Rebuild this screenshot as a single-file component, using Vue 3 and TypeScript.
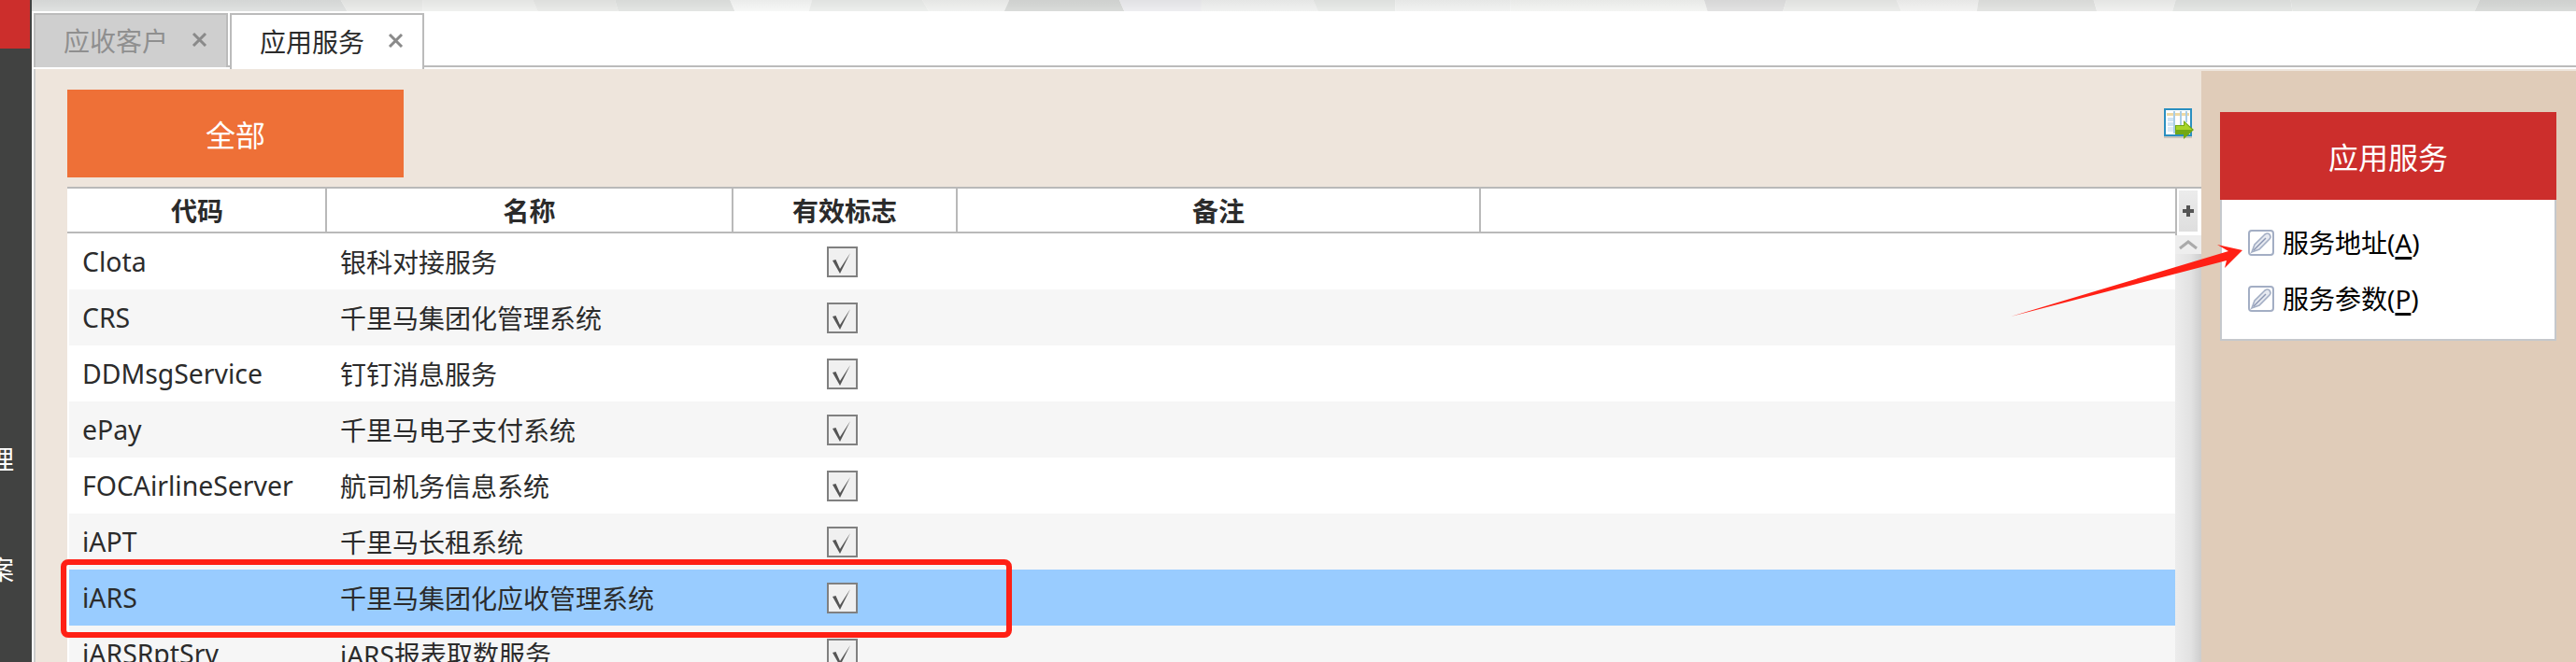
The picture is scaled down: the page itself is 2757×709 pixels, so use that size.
<script setup lang="ts">
interface Row { code: string; name: string; selected?: boolean }
const rows: Row[] = [
  { code: 'Clota', name: '银科对接服务' },
  { code: 'CRS', name: '千里马集团化管理系统' },
  { code: 'DDMsgService', name: '钉钉消息服务' },
  { code: 'ePay', name: '千里马电子支付系统' },
  { code: 'FOCAirlineServer', name: '航司机务信息系统' },
  { code: 'iAPT', name: '千里马长租系统' },
  { code: 'iARS', name: '千里马集团化应收管理系统', selected: true },
  { code: 'iARSRptSrv', name: 'iARS报表取数服务' },
]
const actions = [
  { label: '服务地址', key: 'A' },
  { label: '服务参数', key: 'P' },
]
// Decorative strip facets: [top edge, bottom edge, colour], in strip pixels.
const k = 2757 / 1568
const edges: [number, number, string][] = [
  [20, 20, '#dfe1e0'], [208, 212, '#ebecea'], [258, 258, '#eff0ee'], [325, 328, '#e9eae8'],
  [375, 377, '#e3e5e3'], [445, 448, '#f7f8f7'], [495, 493, '#eceeec'], [562, 566, '#f1f2f0'],
  [615, 612, '#d9dbd9'], [682, 685, '#ededf0'], [732, 732, '#f1f2f1'], [800, 803, '#e9ebe9'],
  [850, 850, '#f2f3f2'], [920, 920, '#f4f5f3'], [1038, 1040, '#e2e2e2'], [1088, 1086, '#ebecea'],
  [1155, 1158, '#f3f3f2'], [1205, 1204, '#e3e4e2'], [1275, 1277, '#f0f1ef'], [1325, 1323, '#e4e6e4'],
  [1395, 1396, '#e6e8e6'], [1510, 1507, '#d9dbd9'], [1570, 1570, '#d9dbd9'],
]
const facets = edges.slice(0, -1).map((e, i) => {
  const n = edges[i + 1]
  const x = (v: number) => ((v - 20) * k).toFixed(1)
  return { points: `${x(e[0])},0 ${x(n[0])},0 ${x(n[1])},12 ${x(e[1])},12`, fill: e[2] }
})
</script>

<template>
  <div class="page">
    <aside class="side">
      <div class="side-red"></div>
      <span class="side-a">理</span>
      <span class="side-b">案</span>
    </aside>
    <main class="main">
      <svg class="strip" width="2723" height="12" viewBox="0 0 2723 12">
        <defs>
          <linearGradient id="stripShade" x1="0" y1="0" x2="0" y2="1">
            <stop offset="0" stop-color="#000" stop-opacity="0.05" />
            <stop offset="1" stop-color="#000" stop-opacity="0" />
          </linearGradient>
        </defs>
        <polygon v-for="f in facets" :key="f.points" :points="f.points" :fill="f.fill" />
        <rect width="2723" height="12" fill="url(#stripShade)" />
      </svg>
      <nav class="tabs">
        <div class="tab tab-off">
          <span>应收客户</span>
          <svg class="x" width="17" height="15" viewBox="0 0 17 15"><path d="M2 1l13 13M15 1L2 14" stroke="#8a8a8a" stroke-width="3" fill="none" /></svg>
        </div>
        <div class="tab tab-on">
          <span>应用服务</span>
          <svg class="x" width="17" height="15" viewBox="0 0 17 15"><path d="M2 1l13 13M15 1L2 14" stroke="#8a8a8a" stroke-width="3" fill="none" /></svg>
        </div>
      </nav>
      <div class="body">
        <section class="left">
          <div class="toolbar">
            <button class="all">全部</button>
            <svg class="export" width="33" height="33" viewBox="0 0 33 33">
              <rect x="0" y="30" width="30" height="2" fill="#c9c4bd" />
              <rect x="1" y="1" width="28" height="28" fill="#fff" stroke="#2a8fc0" stroke-width="2" />
              <rect x="3" y="5" width="24" height="3" fill="#eed9a4" />
              <rect x="4" y="10" width="6" height="4" fill="#cfe4f4" />
              <rect x="4" y="15" width="6" height="4" fill="#cfe4f4" />
              <rect x="4" y="20" width="6" height="5" fill="#dcebf7" />
              <path d="M11 3v24M18 3v15M24 3v12" stroke="#a9cde6" stroke-width="2" fill="none" />
              <path d="M12 18h9v-5l11 10-11 10v-5h-9z" fill="#72a814" />
              <path d="M13 19h9v-4l8 8H13z" fill="#a8d42a" />
            </svg>
          </div>
          <div class="grid">
            <div class="grid-main">
              <div class="head">
                <div class="c1 hc">代码</div>
                <div class="c2 hc">名称</div>
                <div class="c3 hc">有效标志</div>
                <div class="c4 hc">备注</div>
                <div class="c5"></div>
              </div>
              <div v-for="(r, i) in rows" :key="r.code" class="row" :class="{ odd: i % 2 === 1, sel: r.selected }">
                <div class="c1 cell code">{{ r.code }}</div>
                <div class="c2 cell">{{ r.name }}</div>
                <div class="c3 cell chk">
                  <span class="box">
                    <svg width="29" height="29" viewBox="0 0 29 29"><path d="M4 13l3.5-1 4.5 10L23 5 12 27z" fill="#555" /></svg>
                  </span>
                </div>
              </div>
            </div>
            <div class="scroll">
              <div class="plus-wrap">
                <div class="plus"><svg width="14" height="14" viewBox="0 0 14 14"><path d="M5 1h4v4h4v4H9v4H5V9H1V5h4z" fill="#555" /></svg></div>
              </div>
              <div class="up"><svg width="20" height="12" viewBox="0 0 20 12"><path d="M1 10l9-7 9 7" fill="none" stroke="#aaa" stroke-width="3" /></svg></div>
              <div class="track"></div>
            </div>
          </div>
        </section>
        <aside class="right">
          <div class="card">
            <div class="card-head">应用服务</div>
            <div class="card-body">
              <div v-for="a in actions" :key="a.key" class="action">
                <svg width="28" height="28" viewBox="0 0 28 28">
                  <rect x="1" y="1" width="26" height="26" rx="3" fill="#fff" stroke="#a3aec4" stroke-width="2" />
                  <path d="M4 24l3-8L18 5q3-2 5 0 2 3 0 5L12 21z" fill="#e6e9f0" stroke="#a3aec4" stroke-width="1.6" />
                  <path d="M6 22L19 9" stroke="#8a96b2" stroke-width="1.5" />
                </svg>
                <span class="action-text">{{ a.label }}(<u>{{ a.key }}</u>)</span>
              </div>
            </div>
          </div>
        </aside>
      </div>
    </main>
    <div class="mark-box"></div>
    <svg class="mark-arrow" width="254" height="84" viewBox="0 0 254 84">
      <path d="M2 81L235 11 223 4 250 10 231 29 233 21z" fill="#ff2015" />
    </svg>
  </div>
</template>

<style>
html, body { margin: 0; padding: 0; background: #fff; overflow: hidden; }
</style>

<style scoped>
.page {
  position: relative;
  display: flex;
  width: 2757px;
  height: 709px;
  overflow: hidden;
  background: #fff;
  color: #2b2b2b;
  font-family: "Noto Sans", "Noto Sans CJK SC", sans-serif;
  font-size: 28px;
}
.side {
  width: 34px;
  flex: none;
  background: #414241;
  color: #fff;
  overflow: hidden;
  display: flex;
  flex-direction: column;
  align-items: flex-start;
  line-height: 28px;
}
.side-red { width: 32px; height: 52px; background: #cc2e2c; margin-right: 2px; }
.side-a { margin: 426px 0 0 -13px; }
.side-b { margin: 90px 0 0 -13px; }
.main { flex: 1; min-width: 0; display: flex; flex-direction: column; }
.strip { display: block; flex: none; }
.tabs {
  height: 60px;
  flex: none;
  box-sizing: border-box;
  display: flex;
  gap: 2px;
  padding-top: 2px;
  margin-left: 2px;
  border-bottom: 2px solid #bbb;
}
.tab {
  width: 208px;
  height: 58px;
  box-sizing: border-box;
  border: 2px solid #bbb;
  border-bottom: 0;
  display: flex;
  align-items: center;
  line-height: 1;
}
.tab span { margin-left: 30px; }
.tab-off { background: #cfcfcf; color: #8f8f8f; }
.tab-on { background: #fff; height: 60px; color: #2b2b2b; }
.x { flex: none; margin: -4px 0 0 25px; }
.body { flex: 1; min-height: 0; display: flex; margin: 2px 0 0 2px; background: #eee5dc; border-left: 2px solid #ccc; }
.left { flex: 1; min-width: 0; padding: 22px 0 0 34px; }
.toolbar { display: flex; justify-content: space-between; align-items: flex-start; height: 104px; }
.all {
  width: 360px;
  height: 94px;
  border: 0;
  padding: 0;
  background: #ee7037;
  color: #fff;
  font: inherit;
  font-size: 32px;
}
.export { margin: 20px 7px 0 0; }
.grid { display: flex; height: 520px; }
.grid-main { flex: 1; min-width: 0; background: #fff; border-left: 2px solid #fff; }
.head {
  display: flex;
  height: 50px;
  box-sizing: border-box;
  border-top: 2px solid #b9b9b9;
  border-bottom: 2px solid #b9b9b9;
  margin-left: -2px;
  padding-left: 2px;
  background: #fff;
}
.hc {
  display: flex;
  align-items: center;
  justify-content: center;
  font-weight: 700;
  border-right: 2px solid #b9b9b9;
  box-sizing: border-box;
}
.c1 { width: 276px; flex: none; box-sizing: border-box; }
.c2 { width: 435px; flex: none; box-sizing: border-box; }
.c3 { width: 240px; flex: none; box-sizing: border-box; }
.c4 { width: 560px; flex: none; box-sizing: border-box; }
.c5 { flex: 1; }
.row { display: flex; height: 60px; background: #fff; }
.row.odd { background: #f6f6f6; }
.row.sel { background: #99ccff; }
.cell { display: flex; align-items: center; padding-left: 14px; white-space: nowrap; }
.code { font-size: 28.4px; }
.chk { padding-left: 100px; }
.box {
  width: 33px;
  height: 33px;
  box-sizing: border-box;
  border: 2px solid #808080;
  background: #f0f0f0;
  display: block;
}
.box svg { display: block; }
.scroll { width: 28px; flex: none; display: flex; flex-direction: column; }
.plus-wrap { height: 48px; border-top: 2px solid #b9b9b9; background: #fff; border-left: 2px solid #b9b9b9; padding: 2px 4px 0 2px; }
.plus {
  height: 44px;
  background: linear-gradient(#ececec, #dedede);
  display: flex;
  align-items: center;
  justify-content: center;
}
.up { height: 20px; background: #eee; display: flex; align-items: center; justify-content: center; flex: none; }
.track { flex: 1; background: linear-gradient(90deg, #ececec, #e2e2e2 60%, #cdcdcd); }
.right { width: 401px; flex: none; margin-top: 2px; background: #e0ccb9; padding: 44px 20px 0 20px; box-sizing: border-box; }
.card { width: 360px; }
.card-head {
  height: 94px;
  background: #cc2e2c;
  color: #fff;
  font-size: 32px;
  display: flex;
  align-items: center;
  justify-content: center;
}
.card-body {
  background: #fff;
  border: 2px solid #c5c8cc;
  border-top: 0;
  height: 151px;
  box-sizing: border-box;
  padding: 16px 0 0 28px;
}
.action { height: 60px; display: flex; align-items: center; gap: 9px; color: #000; }
.action svg { flex: none; }
.action-text { white-space: nowrap; margin-top: -2px; }
.action-text u {
  text-decoration-color: #000;
  text-decoration-thickness: 3px;
  text-underline-offset: 4px;
  text-decoration-skip-ink: none;
}
.mark-box {
  position: absolute;
  left: 65px;
  top: 599px;
  width: 1018px;
  height: 84px;
  box-sizing: border-box;
  border: 6px solid #ff2015;
  border-radius: 8px;
  pointer-events: none;
}
.mark-arrow { position: absolute; left: 2150px; top: 258px; pointer-events: none; }
</style>
